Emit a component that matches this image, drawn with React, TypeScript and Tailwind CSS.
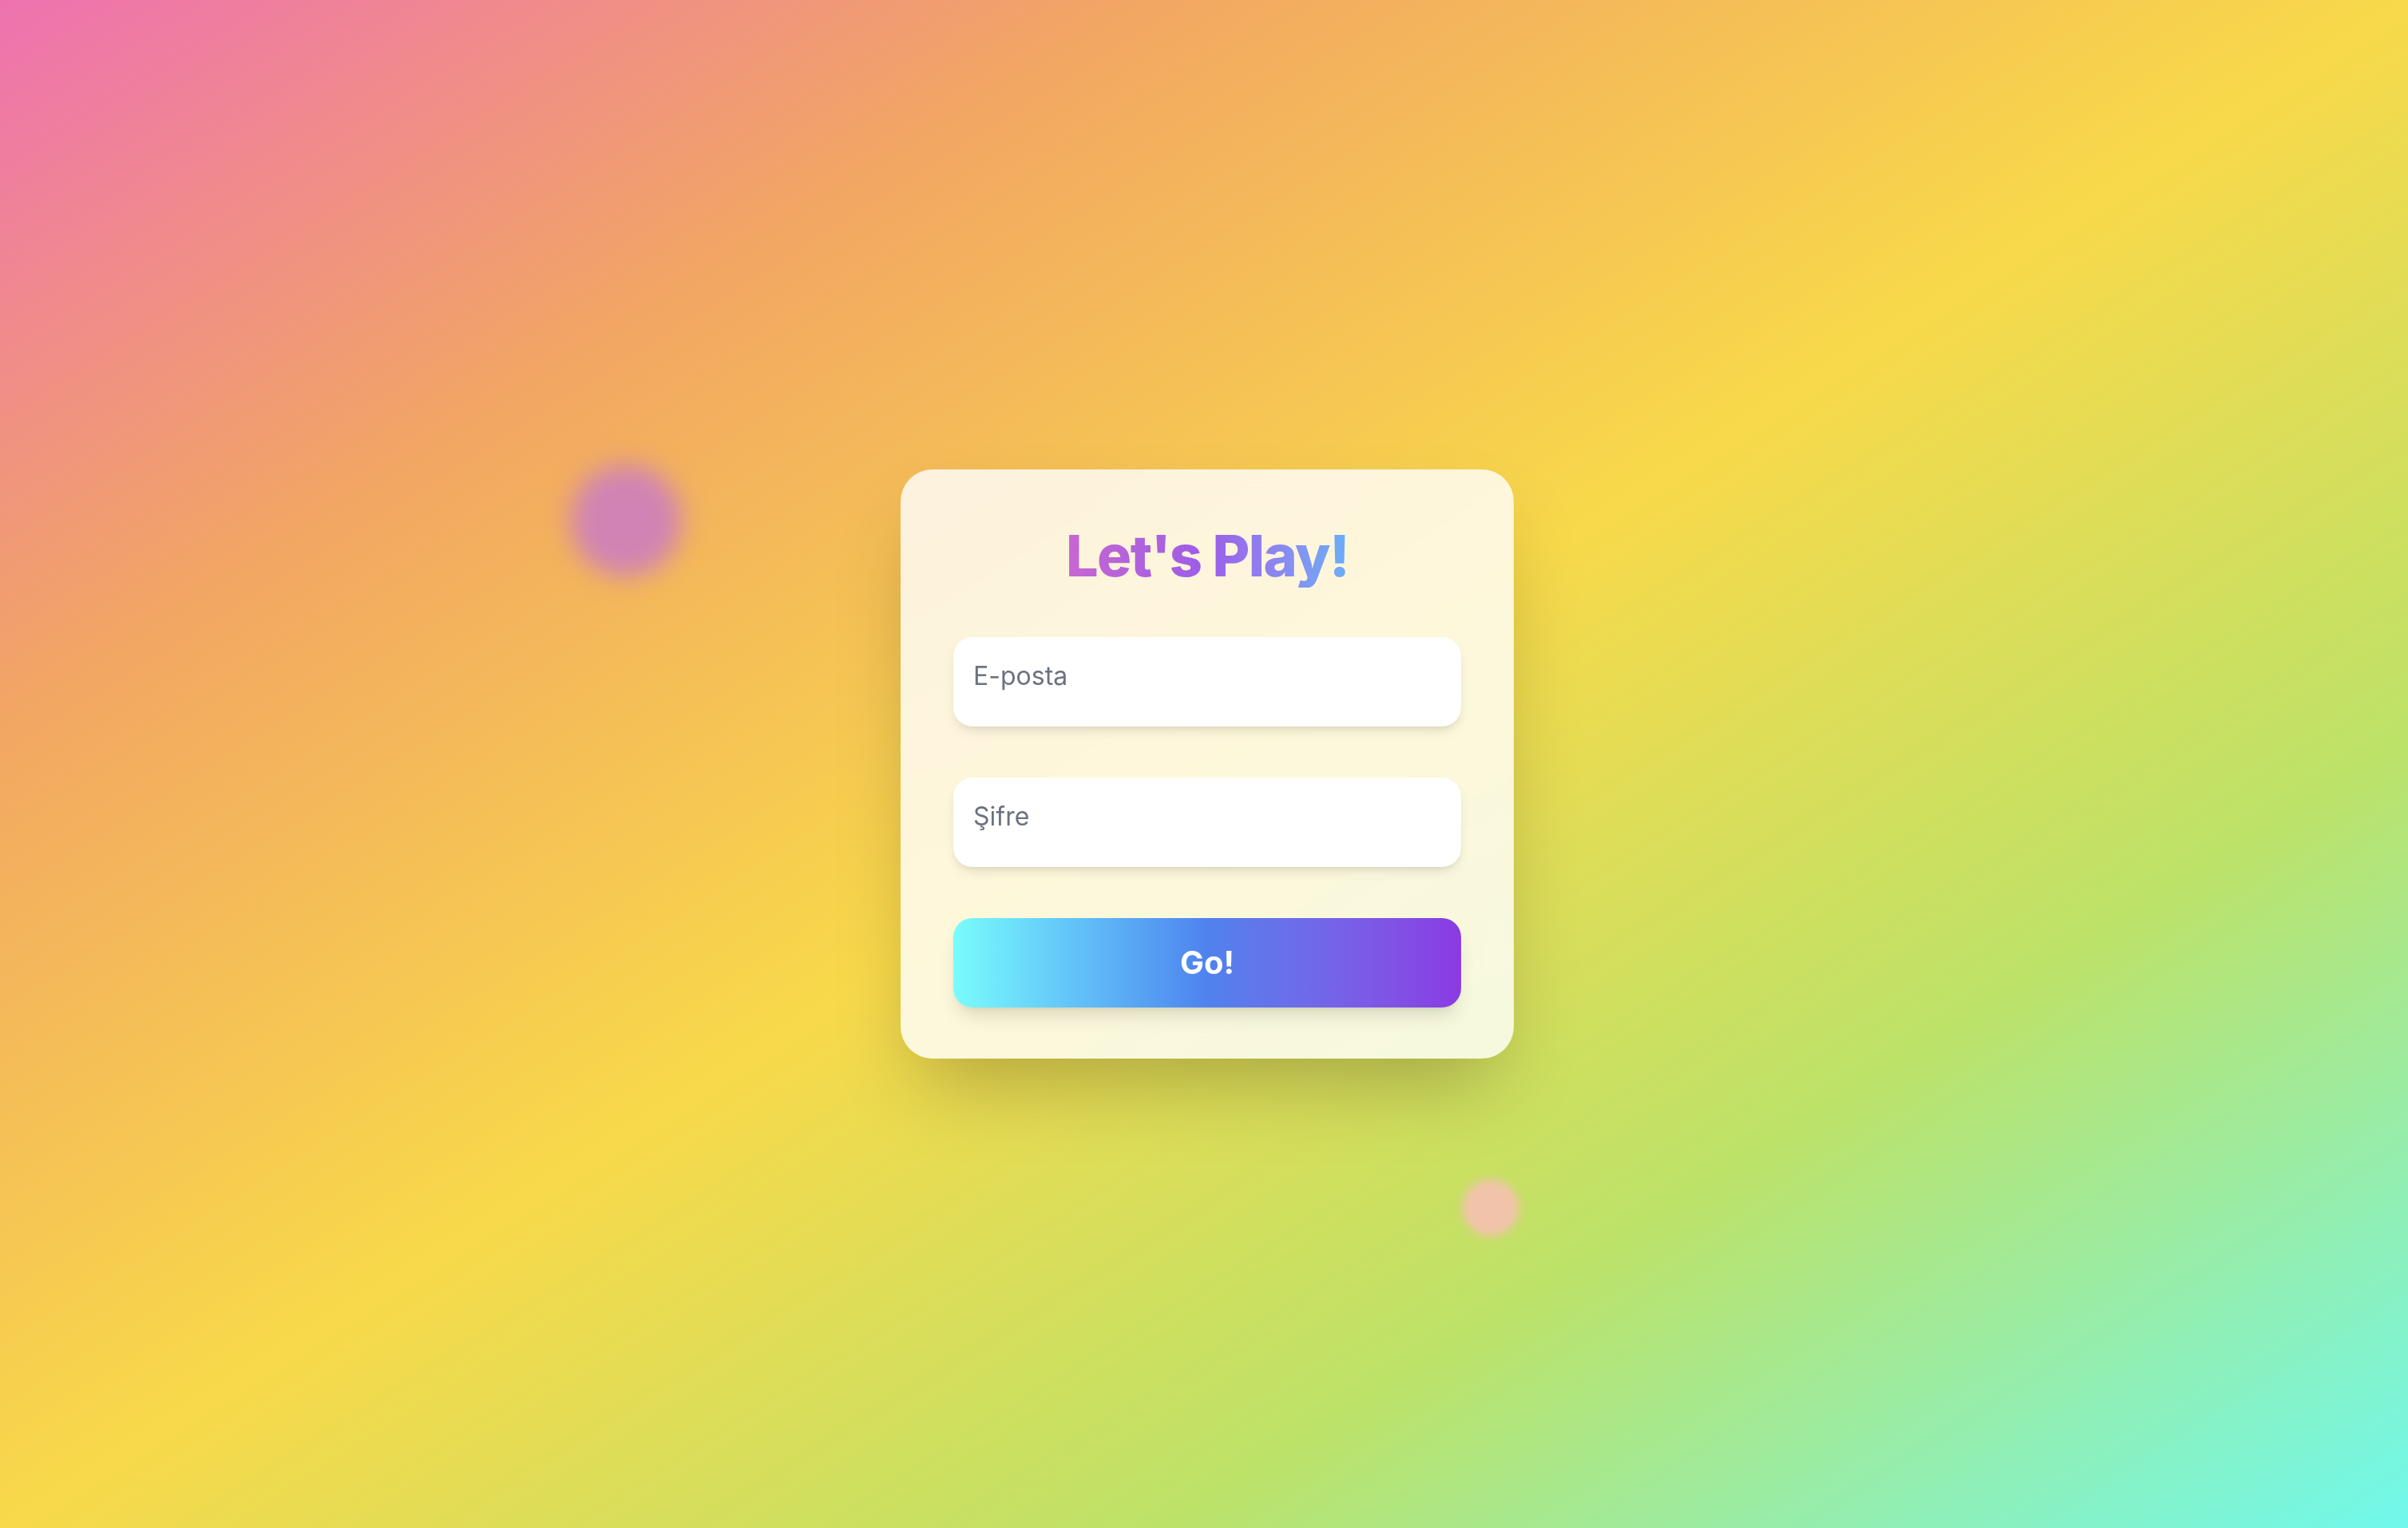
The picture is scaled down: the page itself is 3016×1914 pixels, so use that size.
import { useState } from 'react'

export default function App() {
  const [email, setEmail] = useState('')
  const [password, setPassword] = useState('')

  return (
    <div className="relative min-h-screen w-full overflow-hidden flex items-center justify-center bg-[linear-gradient(to_bottom_right,#ee72b0_0%,#f2a762_24%,#f8d94a_50%,#bde268_74%,#70f8ec_100%)] font-['Inter',sans-serif]">
      {/* floating blobs */}
      <div className="absolute left-[714px] top-[582px] w-[140px] h-[140px] rounded-full bg-[#d083b4] blur-[16px]" />
      <div className="absolute left-[1831px] top-[1477px] w-[72px] h-[72px] rounded-full bg-[#f1c3aa] blur-[6px]" />

      <div className="relative ml-[8px] w-[768px] rounded-[40px] bg-white/80 backdrop-blur-lg px-[66px] pt-[68px] pb-[64px] shadow-[0_50px_100px_-24px_rgba(0,0,0,0.25)]">
        <h1 className="text-center text-[72px] leading-[80px] font-extrabold tracking-[-1.6px] mb-[62px]">
          <span className="inline-block bg-linear-to-r from-[#c866d0] via-[#9c5ce8] to-[#68aef8] bg-clip-text text-transparent">
            Let's Play!
          </span>
        </h1>

        <form className="flex flex-col gap-[64px]" onSubmit={e => e.preventDefault()}>
          <input
            type="email"
            value={email}
            onChange={e => setEmail(e.target.value)}
            placeholder="E-posta"
            className="w-full h-[112px] px-[25px] pt-[24px] pb-[40px] rounded-[24px] bg-white text-[32px] leading-[48px] text-gray-800 placeholder:text-[#6b7280] outline-none shadow-[0_8px_16px_-4px_rgba(0,0,0,0.12),0_4px_8px_-4px_rgba(0,0,0,0.08)]"
          />
          <input
            type="password"
            value={password}
            onChange={e => setPassword(e.target.value)}
            placeholder="Şifre"
            className="w-full h-[112px] px-[25px] pt-[24px] pb-[40px] rounded-[24px] bg-white text-[32px] leading-[48px] text-gray-800 placeholder:text-[#6b7280] outline-none shadow-[0_8px_16px_-4px_rgba(0,0,0,0.12),0_4px_8px_-4px_rgba(0,0,0,0.08)]"
          />
          <button
            type="submit"
            className="w-full h-[112px] rounded-[24px] bg-linear-to-r from-[#7afcfc] via-[#4f82ee] to-[#8a3ae2] text-white text-[40px] font-bold shadow-[0_16px_24px_-6px_rgba(0,0,0,0.12),0_6px_10px_-6px_rgba(0,0,0,0.1)]"
          >
            Go!
          </button>
        </form>
      </div>
    </div>
  )
}
